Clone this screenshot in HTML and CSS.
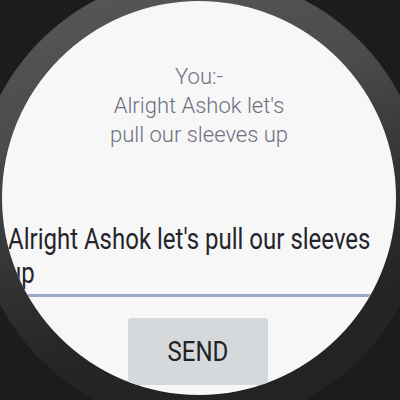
FILE: index.html
```html
<!DOCTYPE html>
<html>
<head>
<meta charset="utf-8">
<link rel="stylesheet" href="styles.css">
</head>
<body>
<div class="screen">
  <div class="face">
    <div class="title">You:-<br>Alright Ashok let's<br>pull our sleeves up</div>
    <div class="field"><span class="field-text">Alright Ashok let's pull our sleeves up</span></div>
    <div class="actions"><div class="send"><span class="send-label">SEND</span></div></div>
  </div>
</div>
</body>
</html>
```

FILE: styles.css
```css
html, body {
  margin: 0;
  padding: 0;
  background: #1c1c1c;
  overflow: hidden;
}
.screen {
  width: 400px;
  height: 400px;
  padding: 1px 0 0 2px;
  box-sizing: border-box;
  background:
    radial-gradient(circle 227px at 200px 200px, transparent 225px, #1c1c1c 226px),
    linear-gradient(165deg, #575757 0%, #4b4b4b 30%, #333 55%, #252525 75%, #222 100%);
}
.face {
  width: 394px;
  height: 394px;
  border-radius: 50%;
  overflow: hidden;
  background: #f7f7f8;
  display: flex;
  flex-direction: column;
  font-family: Roboto, "Noto Sans", sans-serif;
}
.title {
  padding-top: 61px;
  text-align: center;
  font-size: 22px;
  font-weight: 300;
  line-height: 29px;
  color: #6c717d;
}
.field {
  margin: 75px 0 0 6px;
  padding: 0 0 15px 0;
  width: 380px;
  border-bottom: 3px solid #9aa8c8;
}
.field-text {
  display: block;
  font-size: 24px;
  line-height: 27.5px;
  color: #24242a;
  transform: scaleY(1.2);
  transform-origin: top left;
}
.actions {
  display: flex;
  justify-content: center;
  padding: 21px 0 0 0;
}
.send {
  width: 140px;
  height: 67px;
  margin-left: -2px;
  display: flex;
  align-items: center;
  justify-content: center;
  background: #d6d9db;
  border-radius: 3px;
}
.send-label {
  display: block;
  font-size: 24px;
  font-weight: 400;
  color: #222;
  transform: scaleY(1.18);
}
```
